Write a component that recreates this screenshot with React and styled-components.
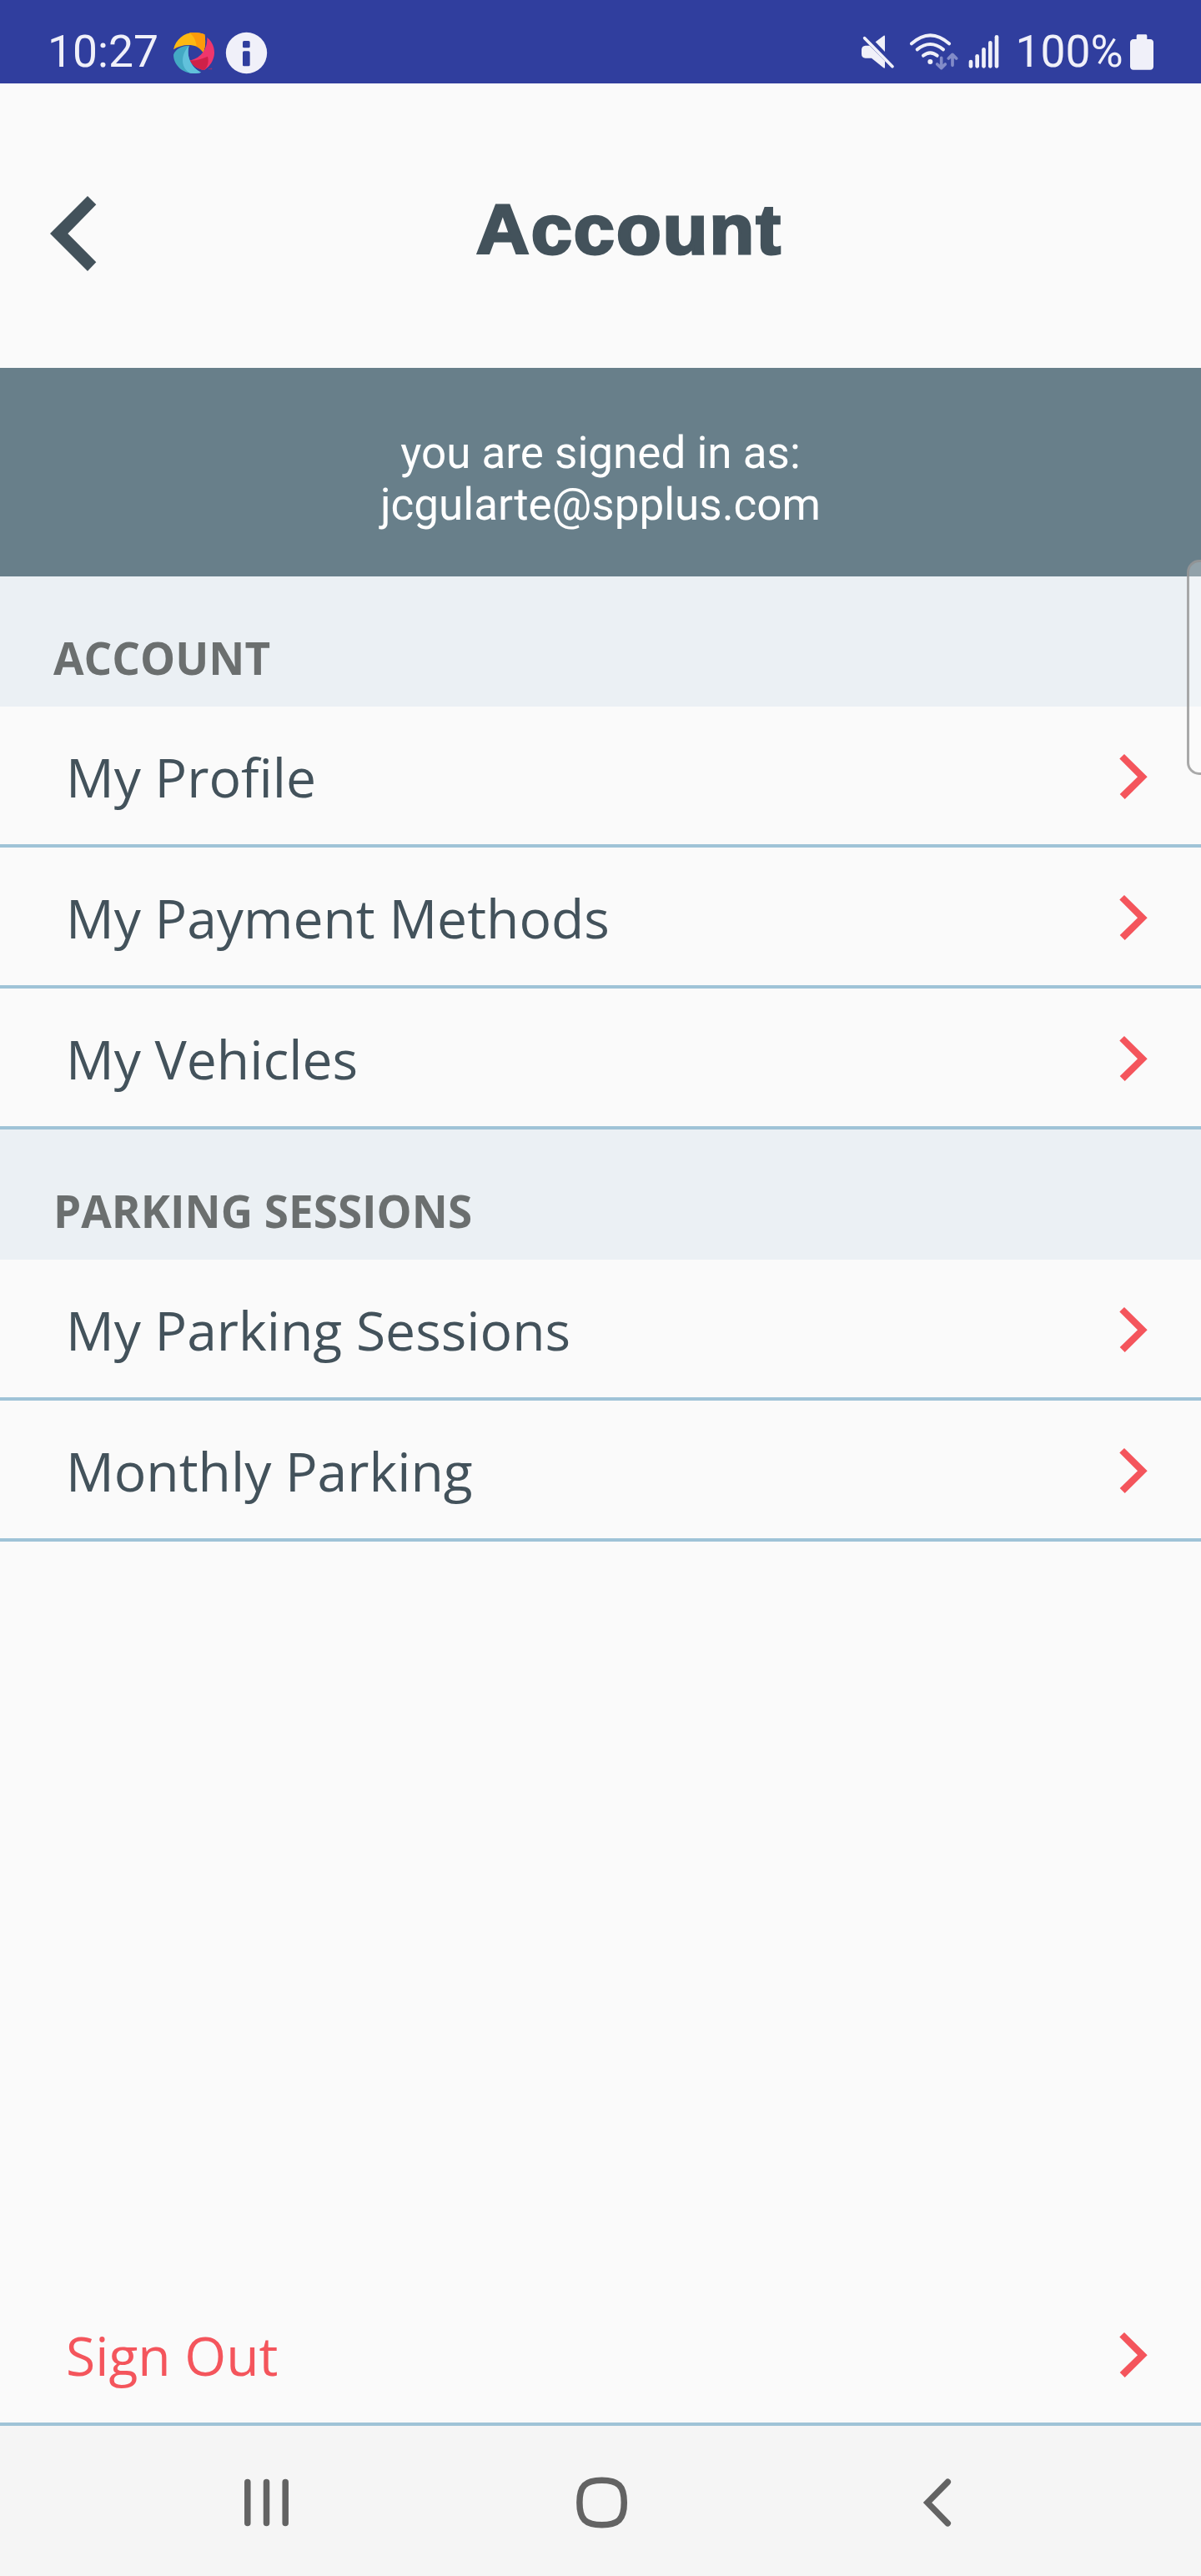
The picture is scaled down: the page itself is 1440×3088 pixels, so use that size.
import React from "react";
import styled, { createGlobalStyle } from "styled-components";

const color = {
  status: "#303e9e",
  statusInk: "#f0f0f9",
  page: "#fafafa",
  ink: "#43525b",
  banner: "#687f8a",
  section: "#ebf0f4",
  sectionInk: "#6b6f6f",
  line: "#9fc3d7",
  accent: "#f4555c",
  nav: "#f5f5f5",
  navInk: "#636363",
};

const GlobalStyle = createGlobalStyle`
  *, *::before, *::after { box-sizing: border-box; }
  body { margin: 0; background: ${color.page}; }
  svg { display: block; flex: none; }
`;

const Screen = styled.div`
  position: relative;
  width: 1440px;
  height: 3088px;
  overflow: hidden;
  display: flex;
  flex-direction: column;
  background: ${color.page};
`;

const StatusBar = styled.div`
  flex: none;
  height: 100px;
  padding: 30px 56px 0 57px;
  display: flex;
  align-items: center;
  justify-content: space-between;
  background: ${color.status};
`;

const StatusGroup = styled.div`
  display: flex;
  align-items: center;
`;

const StatusText = styled.span`
  width: ${(p) => p.$width}px;
  padding: 0 0 6px ${(p) => p.$indent || 0}px;
  font: 400 53.4px/64px Roboto, sans-serif;
  color: ${color.statusInk};
  white-space: nowrap;
`;

const StatusIcon = styled.svg`
  height: 60px;
  margin-right: ${(p) => p.$gap || 0}px;
`;

const Header = styled.header`
  flex: none;
  height: 341px;
  padding: 19px 47px 0 60px;
  display: flex;
  align-items: center;
`;

const Title = styled.h1`
  flex: 1;
  margin: 0;
  padding-bottom: 9px;
  text-align: center;
  font: 700 83px/100px "Liberation Sans", Arial, sans-serif;
  letter-spacing: 2px;
  -webkit-text-stroke: 3px ${color.ink};
  transform: scaleX(1.06);
  color: ${color.ink};
`;

const Banner = styled.div`
  flex: none;
  height: 250px;
  padding-top: 71px;
  text-align: center;
  font: 400 53px/62px Roboto, sans-serif;
  color: #fff;
  background: ${color.banner};
`;

const BannerLine = styled.div``;

const SectionTitle = styled.h2`
  flex: none;
  height: 156px;
  margin: 0;
  padding: 68px 64px 0;
  font: 700 53px/60px "Open Sans", sans-serif;
  color: ${color.sectionInk};
  background: ${color.section};
`;

const Row = styled.div`
  flex: none;
  height: 169px;
  padding: 3px 64px 0 79px;
  display: flex;
  align-items: center;
  justify-content: space-between;
  border-bottom: 4px solid ${color.line};
  font: 400 64.2px/88px "Open Sans", sans-serif;
  color: ${(p) => (p.$accent ? color.accent : color.ink)};
`;

const Spacer = styled.div`
  flex: 1;
`;

const NavBar = styled.nav`
  flex: none;
  height: 180px;
  padding: 4px 0 0 292px;
  display: flex;
  align-items: center;
  background: ${color.nav};
`;

const NavIcon = styled.svg`
  height: 64px;
  margin-right: ${(p) => p.$gap || 0}px;
  fill: none;
  stroke: ${color.navInk};
  stroke-width: 7.5;
`;

const EdgeHandle = styled.div`
  position: absolute;
  top: 671px;
  right: 0;
  width: 17px;
  height: 258px;
  border: 3.5px solid rgba(145, 145, 145, 0.78);
  border-right: none;
  border-radius: 15px 0 0 15px;
  background: rgba(255, 255, 255, 0.28);
`;

const BackIcon = () => (
  <svg width="56" height="90" viewBox="0 0 56 90" fill={color.ink}>
    <path d="M45 0L55.3 10.3L21.3 45L55.3 79.3L45 90L0 45Z" />
  </svg>
);

const RowArrow = () => (
  <svg width="34" height="56" viewBox="0 0 34 56" fill={color.accent}>
    <path d="M.3 6.6L6 1L33.7 28.3L6.7 55L.7 49L22 28.3Z" />
  </svg>
);

const PinwheelIcon = () => (
  <StatusIcon width="51" viewBox="621 105 153 180" $gap={12}>
    <path fill="#fdb813" d="M624 178C632 142 662 117 697 117C712 117 726 119 736 124C739 142 741 166 731 188C716 168 700 162 678 162C657 162 640 168 624 178Z" />
    <path fill="#fd9a0a" d="M680 118C702 115 724 118 736 124C739 142 741 166 731 188C724 178 716 171 707 167C705 146 697 128 680 118Z" />
    <path fill="#ef366c" d="M745 135C762 148 771 168 771 190C771 212 757 238 735 252C710 249 693 237 683 217C718 211 747 180 745 135Z" />
    <path fill="#cf2148" d="M683 217C702 219 722 214 747 203C752 222 748 238 735 252C710 249 693 237 683 217Z" />
    <path fill="#43a9c4" d="M624 197C631 177 653 164 680 164C669 203 688 243 723 260C715 263 706 264 697 264C657 264 624 233 624 197Z" />
    <path fill="#61c1db" d="M680 164C669 203 688 243 723 260C715 263 706 264 697 264L684 263C647 242 651 194 680 164Z" />
    <path fill="none" stroke="#b5325f" strokeWidth="2.5" d="M750 248H755M758 250V246H761V250" />
  </StatusIcon>
);

const InfoIcon = () => (
  <StatusIcon width="51" viewBox="810 105 153 180">
    <circle cx="886.5" cy="190.5" r="74" fill={color.statusInk} />
    <rect x="873" y="147" width="26" height="25" rx="5" fill={color.status} />
    <rect x="873" y="184" width="26" height="54" rx="5" fill={color.status} />
  </StatusIcon>
);

const MuteIcon = () => (
  <StatusIcon width="41" viewBox="96 105 123 180" $gap={17} fill={color.statusInk}>
    <path d="M149 151L179 128Q183 126 183 131V186Z" />
    <path d="M113 164H128L183 220V243Q182 247 178 244L135 209H113Q99 208 99 194V178Q100 165 113 164Z" />
    <path d="M110 137L210 239" stroke={color.statusInk} strokeWidth="11" strokeLinecap="round" />
  </StatusIcon>
);

const WifiIcon = () => (
  <StatusIcon width="59" viewBox="270 105 177 180" $gap={12} fill="none" strokeLinecap="round" strokeLinejoin="round">
    <g stroke={color.statusInk} strokeWidth="12">
      <path d="M279 157Q346 97 414 157" />
      <path d="M299 178Q346 140 393 178" />
      <path d="M321 200Q346 180 371 200" />
    </g>
    <circle cx="346" cy="222" r="9" fill={color.statusInk} />
    <g stroke="#828bc8" strokeWidth="11">
      <path d="M386 208V243M371 231L386 245L400 231" />
      <path d="M426 235V199M412 210L426 196L440 210" />
    </g>
  </StatusIcon>
);

const signalBars = [
  [492, 222],
  [515, 202],
  [538.5, 178],
  [562, 154],
  [585, 133],
];

const SignalIcon = () => (
  <StatusIcon width="37" viewBox="483 105 111 180" stroke={color.statusInk} strokeWidth="14" strokeLinecap="round">
    {signalBars.map(([x, top]) => (
      <path key={x} d={`M${x} ${top}V238`} />
    ))}
  </StatusIcon>
);

const BatteryIcon = () => (
  <StatusIcon width="30" viewBox="1062 105 90 180" fill={color.statusInk}>
    <path d="M1092 124H1122Q1126 124 1126 129V141H1137Q1149 142 1149 153V240Q1148 251 1137 251H1077Q1066 251 1065 240V153Q1066 142 1077 141H1088V129Q1088 124 1092 124Z" />
  </StatusIcon>
);

const sections = [
  { title: "ACCOUNT", rows: ["My Profile", "My Payment Methods", "My Vehicles"] },
  { title: "PARKING SESSIONS", rows: ["My Parking Sessions", "Monthly Parking"] },
];

export default function App() {
  return (
    <Screen>
      <GlobalStyle />
      <StatusBar>
        <StatusGroup>
          <StatusText $width={150}>10:27</StatusText>
          <PinwheelIcon />
          <InfoIcon />
        </StatusGroup>
        <StatusGroup>
          <MuteIcon />
          <WifiIcon />
          <SignalIcon />
          <StatusText $width={156} $indent={19.5}>100%</StatusText>
          <BatteryIcon />
        </StatusGroup>
      </StatusBar>
      <Header>
        <BackIcon />
        <Title>Account</Title>
      </Header>
      <Banner>
        <BannerLine>you are signed in as:</BannerLine>
        <BannerLine>jcgularte@spplus.com</BannerLine>
      </Banner>
      {sections.map((section) => (
        <React.Fragment key={section.title}>
          <SectionTitle>{section.title}</SectionTitle>
          {section.rows.map((label) => (
            <Row key={label}>
              {label}
              <RowArrow />
            </Row>
          ))}
        </React.Fragment>
      ))}
      <Spacer />
      <Row $accent>
        Sign Out
        <RowArrow />
      </Row>
      <NavBar>
        <NavIcon width="56" viewBox="292 2968.5 56 64" strokeLinecap="round" $gap={342}>
          <path d="M296.8 2976V3025M319.5 2976V3025M342.2 2976V3025" />
        </NavIcon>
        <NavIcon width="64" viewBox="690 2968.5 64 64" $gap={351}>
          <path d="M721.6 2973.8C741.5 2973.8 748.3 2980.5 748.3 3000.5C748.3 3020.5 741.5 3027.2 721.6 3027.2C701.7 3027.2 694.9 3020.5 694.9 3000.5C694.9 2980.5 701.7 2973.8 721.6 2973.8Z" />
        </NavIcon>
        <NavIcon width="36" viewBox="1105 2968.5 36 64" strokeLinecap="round">
          <path d="M1136.3 2975.8L1112.1 3000.5L1136.3 3025.3" />
        </NavIcon>
      </NavBar>
      <EdgeHandle />
    </Screen>
  );
}
